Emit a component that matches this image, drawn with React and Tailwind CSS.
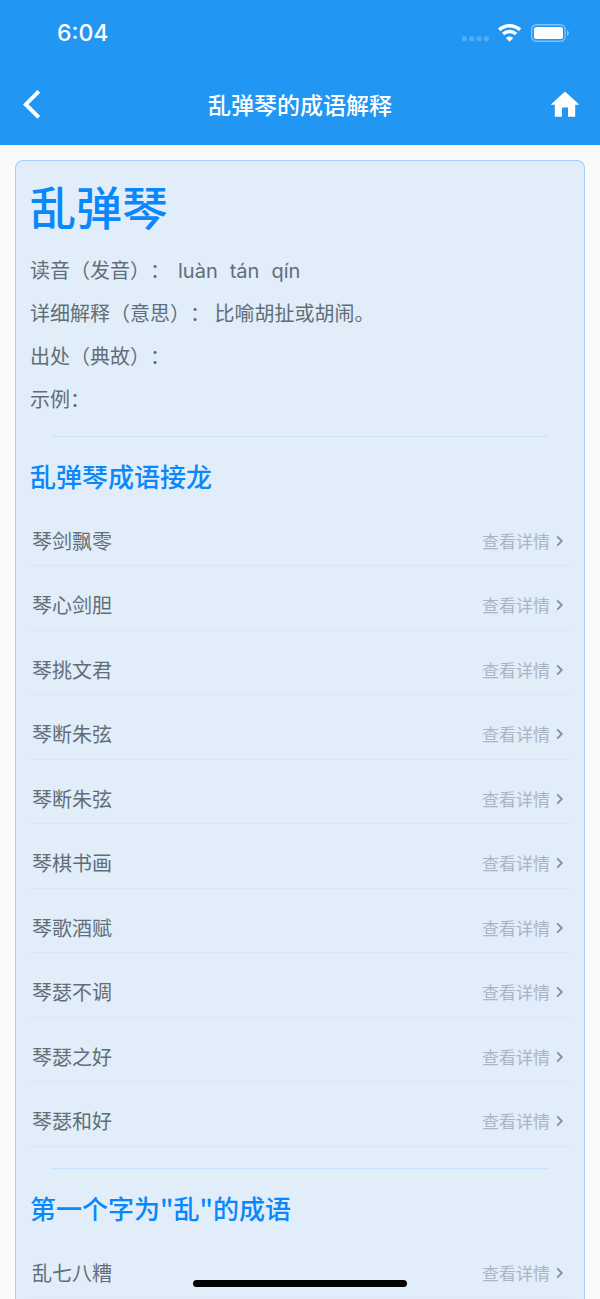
import { clsx } from "clsx";

const idiom = {
  word: "乱弹琴",
  pinyin: ["luàn", "tán", "qín"],
  meaning: "比喻胡扯或胡闹。",
  source: "",
  example: "",
};

const sections = [
  {
    title: "乱弹琴成语接龙",
    words: [
      "琴剑飘零",
      "琴心剑胆",
      "琴挑文君",
      "琴断朱弦",
      "琴断朱弦",
      "琴棋书画",
      "琴歌酒赋",
      "琴瑟不调",
      "琴瑟之好",
      "琴瑟和好",
    ],
  },
  {
    title: '第一个字为"乱"的成语',
    words: ["乱七八糟"],
  },
];

function StatusBar() {
  return (
    <div className="flex h-[65px] items-center justify-between pr-[31px] pl-[57px]">
      <span className="font-['Inter'] text-[23px] leading-7 font-medium">6:04</span>
      <div className="flex items-center">
        <svg className="mr-2 h-[18px] w-7" viewBox="0 0 28 18" fill="white" fillOpacity="0.22">
          <rect x="0" y="12.2" width="5" height="5" rx="1.4" />
          <rect x="7.3" y="12.2" width="5" height="5" rx="1.4" />
          <rect x="14.6" y="12.2" width="5" height="5" rx="1.4" />
          <rect x="21.9" y="12.2" width="5" height="5" rx="1.4" />
        </svg>
        <svg className="mr-[9px] h-[18px] w-6" viewBox="0 0 24 18" fill="none" stroke="white">
          <path d="M1.2 5.9 C7.2 0.4 16 0.4 22 5.9" strokeWidth="3.5" />
          <path d="M5.1 10.1 C8.8 6.7 14.4 6.7 18.1 10.1" strokeWidth="3.4" />
          <path
            d="M8 14 C10 12 13.2 12 15.2 14 L11.6 17.8 Z"
            fill="white"
            stroke="none"
          />
        </svg>
        <svg className="h-[18px] w-[38px]" viewBox="0 0 38 18" fill="none">
          <rect
            x="0.7"
            y="0.7"
            width="33.4"
            height="16.6"
            rx="4.8"
            stroke="white"
            strokeOpacity="0.42"
            strokeWidth="1.4"
          />
          <rect x="3" y="3" width="29" height="12" rx="2.6" fill="white" />
          <path d="M36 6 C38.4 7 38.4 11 36 12 Z" fill="white" fillOpacity="0.45" />
        </svg>
      </div>
    </div>
  );
}

function NavBar({ title }) {
  return (
    <div className="flex h-20 items-center justify-between px-5">
      <button type="button" aria-label="返回" className="flex w-8">
        <svg className="h-8 w-6" viewBox="0 0 24 32" fill="none" stroke="white" strokeWidth="4">
          <path d="M18.8 2.4 L5.8 15.4 L18.8 28.4" />
        </svg>
      </button>
      <h1 className="pb-0.5 text-[23px] leading-8 font-medium">{title}</h1>
      <button type="button" aria-label="首页" className="flex w-8 justify-end">
        <svg className="h-[30px] w-[30px]" viewBox="0 0 30 30" fill="white">
          <path d="M15 1.6 L29.4 14.8 H25.2 V26.8 H18 V17.6 H12 V26.8 H4.8 V14.8 H0.6 Z" />
        </svg>
      </button>
    </div>
  );
}

function WordRow({ word }) {
  return (
    <li className="h-16 border-b border-[#d9e5f1] even:h-[65px]">
      <a href="#" className="flex h-full items-center justify-between pt-3.5 pr-1 pl-0.5">
        <span className="text-xl leading-6">{word}</span>
        <span className="flex items-center gap-1 text-[17px] leading-6 text-[#a9b5c0]">
          查看详情
          <svg
            className="h-3 w-3"
            viewBox="0 0 12 12"
            fill="none"
            stroke="#84909b"
            strokeWidth="1.8"
          >
            <path d="M3.2 1.4 L7.8 6 L3.2 10.6" />
          </svg>
        </span>
      </a>
    </li>
  );
}

function WordSection({ title, words, first }) {
  return (
    <section className={clsx(first ? "pt-4" : "pt-[21px]")}>
      <hr className="mx-[22px] border-t border-[#c5e1fb]" />
      <h3 className="pt-[19px] pb-1.5 text-[26px] leading-10 font-medium text-[#0a88fb]">
        {title}
      </h3>
      <ul>
        {words.map((word, i) => (
          <WordRow key={i} word={word} />
        ))}
      </ul>
    </section>
  );
}

export default function App() {
  return (
    <div className="flex h-screen flex-col bg-[#fafafa] font-['Noto_Sans_CJK_SC',sans-serif]">
      <header className="shrink-0 bg-[#2196f3] text-white">
        <StatusBar />
        <NavBar title={`${idiom.word}的成语解释`} />
      </header>

      <main className="flex min-h-0 flex-1 flex-col overflow-hidden px-[15px] pt-[15px]">
        <article className="flex-1 rounded-t-lg border border-b-0 border-[#a3d1fb] bg-[#e1edf9] px-3.5 pt-1 text-[#616d78]">
          <h2 className="pb-[3px] text-[46px] leading-[80px] font-medium text-[#0a88fb]">
            {idiom.word}
          </h2>
          <div className="text-xl leading-[43px] [text-spacing-trim:space-all]">
            <p className="flex h-[43px] items-baseline">
              读音（发音）：
              <span className="flex gap-3 pl-2 font-['Inter']">
                {idiom.pinyin.map((syllable) => (
                  <span key={syllable}>{syllable}</span>
                ))}
              </span>
            </p>
            <p>详细解释（意思）： {idiom.meaning}</p>
            <p>出处（典故）：{idiom.source}</p>
            <p>示例：{idiom.example}</p>
          </div>
          {sections.map((section, i) => (
            <WordSection key={section.title} first={i === 0} {...section} />
          ))}
        </article>
      </main>

      {/* Home indicator */}
      <div className="fixed bottom-3 left-1/2 h-[7px] w-[214px] -translate-x-1/2 rounded-full bg-black" />
    </div>
  );
}
